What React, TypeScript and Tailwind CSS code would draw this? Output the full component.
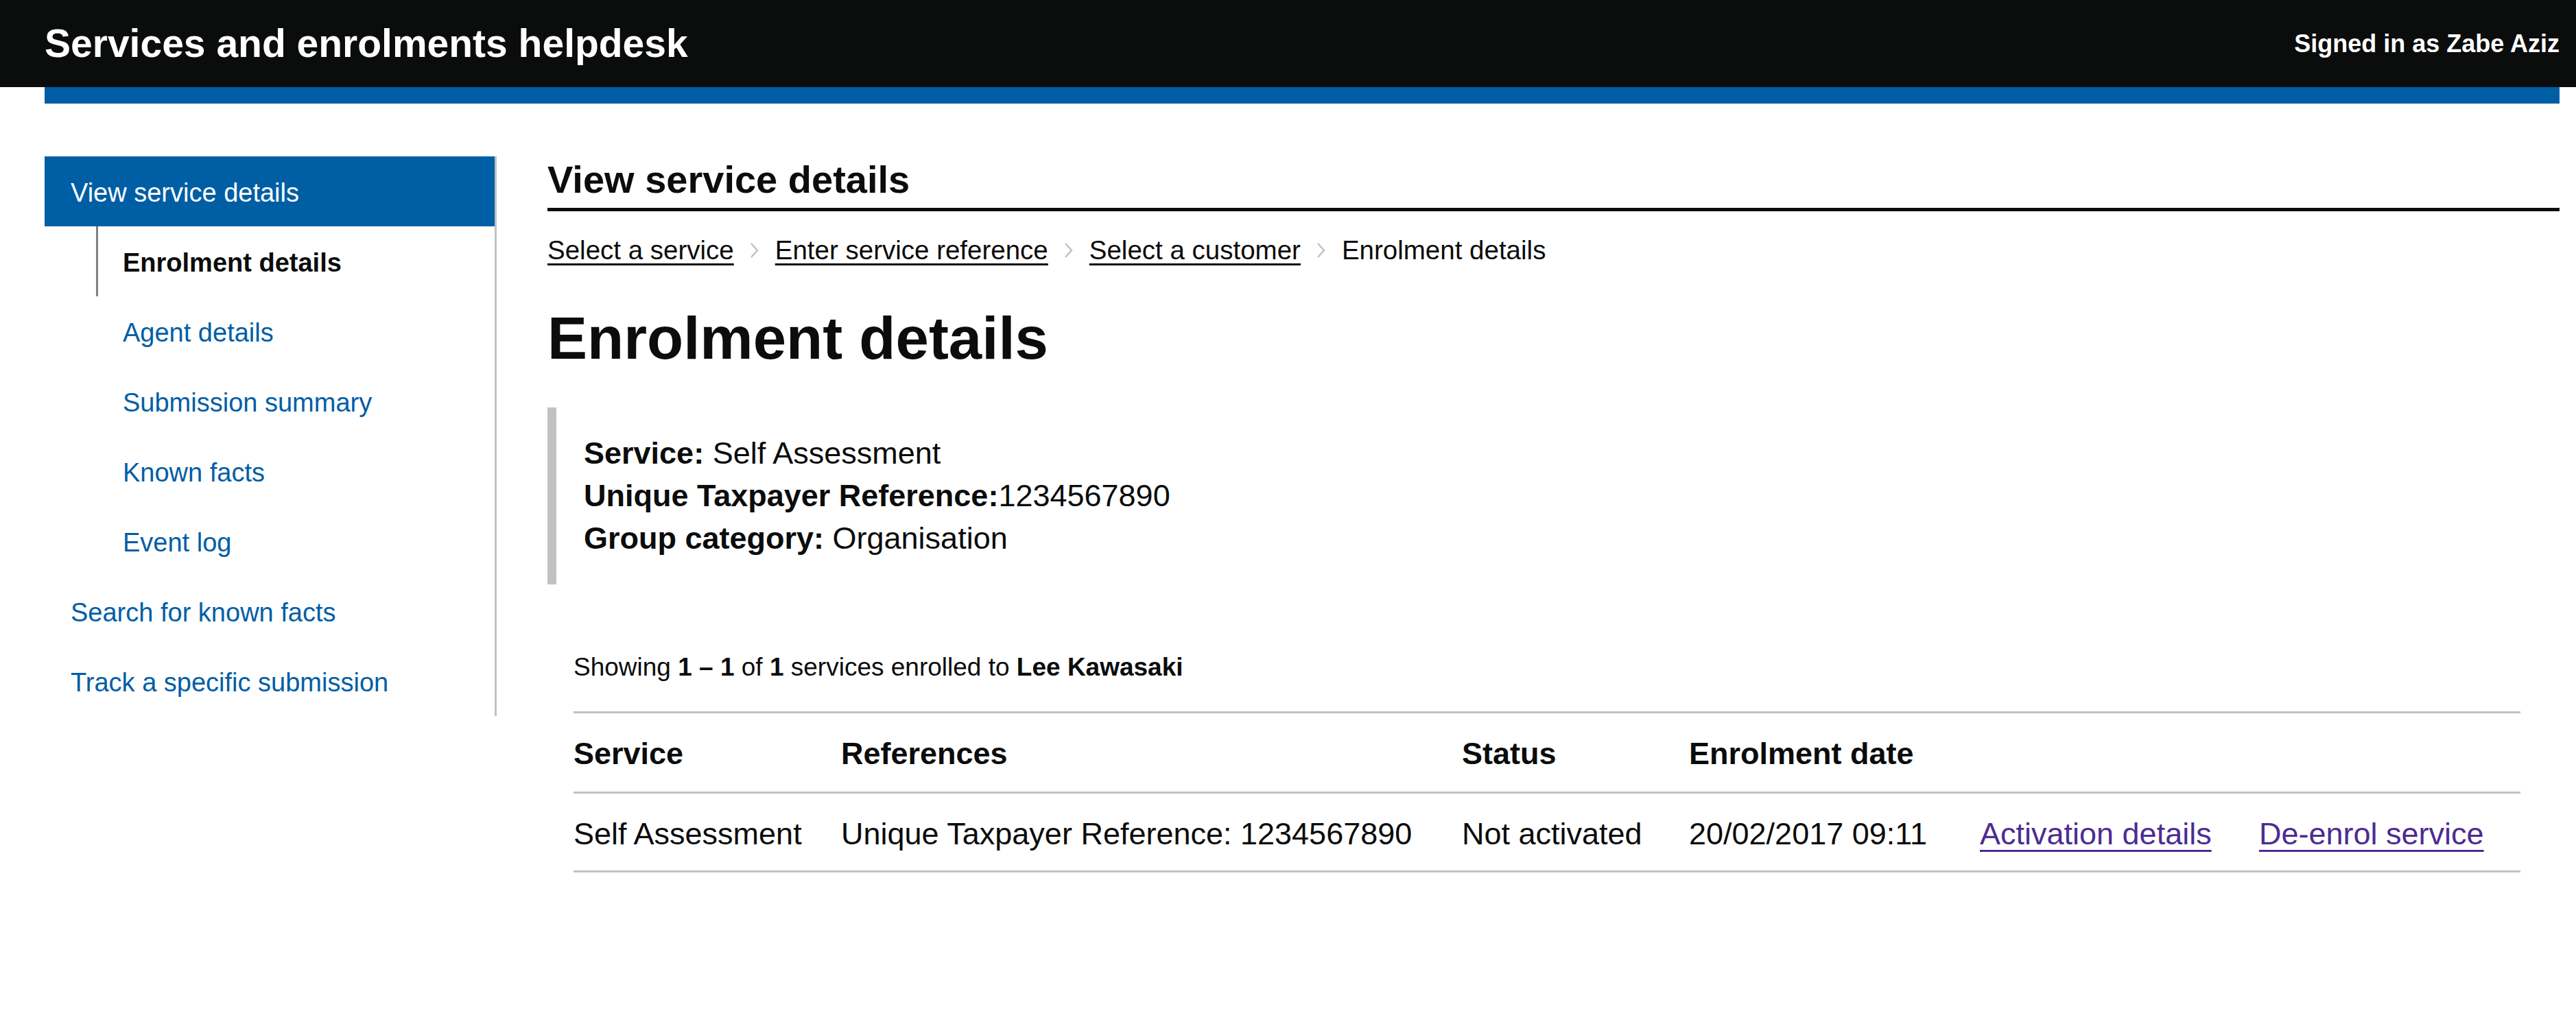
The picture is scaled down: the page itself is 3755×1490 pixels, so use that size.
import React from "react";

const font = { fontFamily: '"Liberation Sans", Arial, sans-serif' };

function Chevron() {
  return (
    <svg width="16" height="30" viewBox="0 0 16 30" className="mx-[22px] shrink-0">
      <polyline points="3,5 12,15 3,25" fill="none" stroke="#bfc1c3" strokeWidth="2.5" />
    </svg>
  );
}

export default function App() {
  const sub = ["Agent details", "Submission summary", "Known facts", "Event log"];
  return (
    <div className="min-h-[1490px] bg-white text-[#0b0c0c]" style={font}>
      <header className="h-[127px] bg-[#0b0c0c] flex items-center justify-between pl-[65px] pr-[24px]">
        <div className="text-white font-bold text-[57px] leading-none">Services and enrolments helpdesk</div>
        <div className="text-white font-bold text-[36px] leading-none">Signed in as Zabe Aziz</div>
      </header>
      <div className="ml-[65px] mr-[24px]">
        <div className="h-[24px] bg-[#005ea5]" />
        <div className="flex pt-[77px]">
          <nav className="w-[659px] shrink-0 border-r-[3px] border-[#bfc1c3] self-start">
            <div className="h-[102px] bg-[#005ea5] flex items-center pt-[4px] pl-[38px] text-white text-[38px]">View service details</div>
            <div className="h-[102px] flex items-center pt-[4px] ml-[75px] border-l-[3px] border-[#808080] pl-[36px] font-bold text-[38px]">Enrolment details</div>
            {sub.map((s) => (
              <div key={s} className="h-[102px] flex items-center pt-[4px] pl-[114px] text-[#005ea5] text-[38px]">{s}</div>
            ))}
            <div className="h-[102px] flex items-center pt-[4px] pl-[38px] text-[#005ea5] text-[38px]">Search for known facts</div>
            <div className="h-[102px] flex items-center pt-[4px] pl-[38px] text-[#005ea5] text-[38px]">Track a specific submission</div>
          </nav>
          <main className="flex-1 ml-[74px]">
            <h2 className="font-bold text-[56px] leading-[67px] pb-[8px] border-b-[5px] border-[#0b0c0c]">View service details</h2>
            <div className="flex items-center mt-[36px] text-[38.5px] leading-[42px]">
              <span className="underline decoration-[3px] underline-offset-[6px]">Select a service</span>
              <Chevron />
              <span className="underline decoration-[3px] underline-offset-[6px]">Enter service reference</span>
              <Chevron />
              <span className="underline decoration-[3px] underline-offset-[6px]">Select a customer</span>
              <Chevron />
              <span>Enrolment details</span>
            </div>
            <h1 className="font-bold text-[87px] leading-[96px] mt-[59px]">Enrolment details</h1>
            <div className="mt-[53px] border-l-[13px] border-[#bfc1c3] pl-[40px] py-[36px] text-[45px] leading-[62px]">
              <div><span className="font-bold">Service:</span> Self Assessment</div>
              <div><span className="font-bold">Unique Taxpayer Reference:</span>1234567890</div>
              <div><span className="font-bold">Group category:</span> Organisation</div>
            </div>
            <div className="ml-[38px] mr-[57px]">
              <p className="mt-[100px] text-[37px] leading-[42px]">
                Showing <span className="font-bold">1 – 1</span> of <span className="font-bold">1</span> services enrolled to <span className="font-bold">Lee Kawasaki</span>
              </p>
              <div className="mt-[43px] border-t-[3px] border-[#bfc1c3] text-[45px] leading-[52px]">
                <div className="grid grid-cols-[390px_905px_331px_424px_407px_1fr] h-[117px] items-center pt-[4px] border-b-[3px] border-[#bfc1c3] font-bold">
                  <div>Service</div>
                  <div>References</div>
                  <div>Status</div>
                  <div>Enrolment date</div>
                  <div></div>
                  <div></div>
                </div>
                <div className="grid grid-cols-[390px_905px_331px_424px_407px_1fr] h-[115px] items-center pt-[6px] border-b-[3px] border-[#bfc1c3]">
                  <div>Self Assessment</div>
                  <div>Unique Taxpayer Reference: 1234567890</div>
                  <div>Not activated</div>
                  <div>20/02/2017 09:11</div>
                  <div><span className="text-[#4c2c92] underline decoration-[3px] underline-offset-[8px]">Activation details</span></div>
                  <div><span className="text-[#4c2c92] underline decoration-[3px] underline-offset-[8px]">De-enrol service</span></div>
                </div>
              </div>
            </div>
          </main>
        </div>
      </div>
    </div>
  );
}
